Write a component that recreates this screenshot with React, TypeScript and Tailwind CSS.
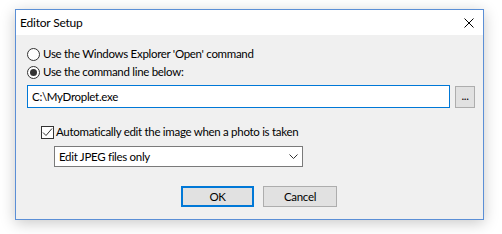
import { useState } from 'react'

function Radio({ checked }: { checked: boolean }) {
    return (
        <span className="w-[13px] h-[13px] rounded-full border border-[#333333] bg-white flex items-center justify-center shrink-0">
            {checked && <span className="w-[7px] h-[7px] rounded-full bg-[#333333]" />}
        </span>
    )
}

export default function App() {
    const [mode, setMode] = useState<'explorer' | 'cmd'>('cmd')
    const [auto, setAuto] = useState(true)

    return (
        <div className="w-[502px] h-[234px] bg-white pt-[9px] pl-[15px] font-['Lato',sans-serif] text-[11.5px] tracking-[-0.3px] text-black leading-none">
            <div className="w-[469px] h-[211px] border border-[#5b8fd6] bg-[#f0f0f0] flex flex-col shadow-[0_3px_14px_rgba(0,0,0,0.22)]">
                {/* title bar */}
                <div className="h-[25px] bg-white flex items-center justify-between pl-[4px] pr-[9px] shrink-0">
                    <span className="text-[12px] tracking-[-0.2px]">Editor Setup</span>
                    <svg width="10" height="10" viewBox="0 0 10 10" className="shrink-0">
                        <path d="M0.5 0.5L9.5 9.5M9.5 0.5L0.5 9.5" stroke="#000" strokeWidth="1" />
                    </svg>
                </div>

                <div className="flex flex-col pl-[11px] pt-[10px]">
                    <label className="h-[18px] flex items-center gap-[3px]" onClick={() => setMode('explorer')}>
                        <Radio checked={mode === 'explorer'} />
                        <span>Use the Windows Explorer 'Open' command</span>
                    </label>
                    <label className="h-[18px] flex items-center gap-[3px]" onClick={() => setMode('cmd')}>
                        <Radio checked={mode === 'cmd'} />
                        <span>Use the command line below:</span>
                    </label>

                    <div className="flex items-start gap-[5px] mt-[4px]">
                        <div className="w-[423px] h-[23px] border border-[#0078d7] bg-white flex items-center pl-[4px]">
                            C:\MyDroplet.exe
                        </div>
                        <button className="w-[20px] h-[22px] mt-[1px] border border-[#adadad] bg-[#e1e1e1] flex items-end justify-center pb-[6px] leading-none">
                            ...
                        </button>
                    </div>

                    <label className="h-[18px] flex items-center gap-[2px] mt-[15px] ml-[14px]" onClick={() => setAuto(!auto)}>
                        <span className="w-[13px] h-[13px] border border-[#333333] bg-white flex items-center justify-center shrink-0">
                            {auto && (
                                <svg width="11" height="11" viewBox="0 0 11 11">
                                    <path d="M1 5.5L4 8.5L10 1.5" stroke="#333" strokeWidth="1" fill="none" />
                                </svg>
                            )}
                        </span>
                        <span>Automatically edit the image when a photo is taken</span>
                    </label>

                    <div className="w-[249px] h-[21px] mt-[5px] ml-[27px] border border-[#7a7a7a] bg-white flex items-center justify-between pl-[4px] pr-[4px]">
                        <span>Edit JPEG files only</span>
                        <svg width="9" height="5" viewBox="0 0 9 5">
                            <path d="M0.5 0.5L4.5 4.5L8.5 0.5" stroke="#333" strokeWidth="1" fill="none" />
                        </svg>
                    </div>

                    <div className="flex gap-[9px] mt-[19px] ml-[154px]">
                        <button className="w-[73px] h-[21px] border-2 border-[#0078d7] bg-[#e1e1e1] flex items-center justify-center">
                            OK
                        </button>
                        <button className="w-[74px] h-[21px] border border-[#adadad] bg-[#e1e1e1] flex items-center justify-center">
                            Cancel
                        </button>
                    </div>
                </div>
            </div>
        </div>
    )
}
